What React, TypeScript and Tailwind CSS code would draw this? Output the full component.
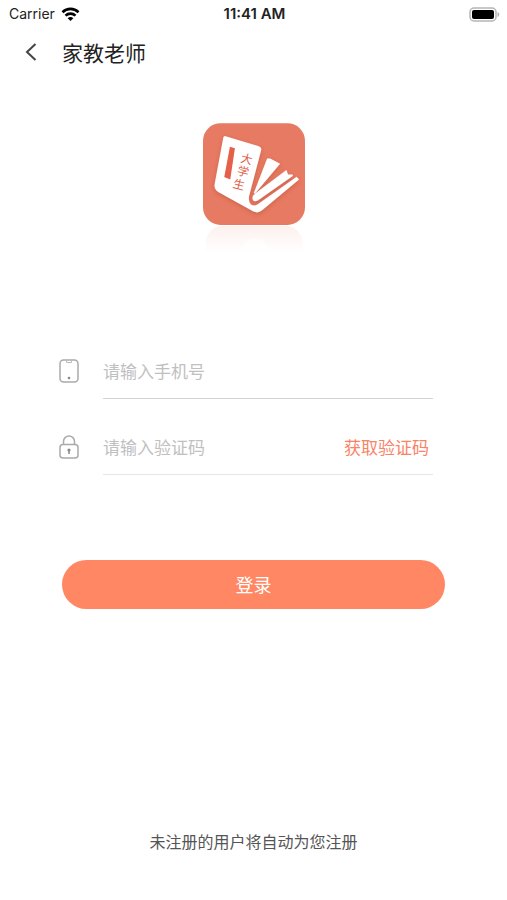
import React from "react";

function StatusBar() {
  return (
    <div className="grid h-7 grid-cols-3 items-center pr-[7px] pl-[9px] font-['Inter',sans-serif] text-[14px] leading-5 text-[#222]">
      <div className="flex items-center gap-[6px]">
        <span>Carrier</span>
        <svg className="h-[14px] w-[19px]" viewBox="0 0 18 14" fill="none" stroke="#000" strokeWidth="2.6" aria-label="Wi-Fi">
          <path d="M1 5.200C5.500.8 12.500.8 17 5.200" />
          <path d="M4 8.600c2.800-2.700 7.200-2.700 10 0" />
          <path d="M9 14 6.200 11.200c1.600-1.500 4-1.500 5.600 0z" fill="#000" stroke="none" />
        </svg>
      </div>
      <span className="text-center text-[15px] font-semibold">11:41 AM</span>
      <svg className="h-[15px] w-[31px] justify-self-end" viewBox="0 0 31 15" aria-label="Battery">
        <rect x="1" y="1" width="26" height="13" rx="4" fill="#fff" stroke="#b5b5b5" strokeWidth="1.500" />
        <rect x="3" y="3" width="22" height="9" rx="2" fill="#000" />
        <path d="M28.500 5c2.400 1 2.400 4 0 5z" fill="#b5b5b5" />
      </svg>
    </div>
  );
}

function Logo() {
  return (
    <svg className="mx-auto h-[140px] w-[102px]" viewBox="38 40 307 420" role="img" aria-label="大学生">
      <defs>
        <linearGradient id="reflection" x1="0" y1="0" x2="0" y2="1">
          <stop offset="0" stopColor="#e87b63" stopOpacity="0.11" />
          <stop offset="1" stopColor="#e87b63" stopOpacity="0" />
        </linearGradient>
        <filter id="shade" x="-20%" y="-20%" width="140%" height="140%">
          <feDropShadow dx="0" dy="5" stdDeviation="7" floodColor="#a83d28" floodOpacity="0.4" />
        </filter>
      </defs>
      <rect x="38" y="40" width="307" height="306" rx="53" fill="#e77a62" />
      <path d="M46 430v-27c0-32 22-54 54-54h184c32 0 54 22 54 54v27z" fill="url(#reflection)" />
      <path d="M158 412c10-32 60-32 76 0v20h-76z" fill="#fff" opacity="0.5" />
      <g filter="url(#shade)">
        <path
          d="M106 79 206 109Q215 112 213 121L177 258C173 280 184 295 203 284L320 201 327 209 215 303Q204 312 190 306L84 247Q71 239 73 224L99 84Q101 77 106 79Z"
          fill="#fff"
        />
        <path d="M231 146 240 146 270 162 194 252 191 250Z" fill="#fff" />
        <path d="M289 181 294 194 307 194 309 198 204 272Q190 280 187 268 186 258 196 251Z" fill="#fff" />
      </g>
      <path d="M119 111 134 115 120 209 102 202Z" fill="#e55f49" />
      <g
        fill="#df604b"
        fontSize="35"
        textAnchor="middle"
        className="font-['Noto_Sans_CJK_SC',sans-serif]"
      >
        <text transform="translate(166 160) rotate(14)">大</text>
        <text transform="translate(156 198) rotate(14)">学</text>
        <text transform="translate(143 237) rotate(14)">生</text>
      </g>
    </svg>
  );
}

function PhoneIcon() {
  return (
    <svg className="h-6 w-5 shrink-0" viewBox="0 0 20 24" fill="none" stroke="#aaa" strokeWidth="1.500" aria-hidden="true">
      <rect x="1" y="1" width="18" height="22" rx="3.500" />
      <path d="M7.500 1.500v2h5v-2" stroke="#bbb" strokeWidth="1" />
      <circle cx="10" cy="19" r="1.300" fill="#888" stroke="none" />
    </svg>
  );
}

function LockIcon() {
  return (
    <svg className="h-6 w-5 shrink-0" viewBox="0 0 20 24" fill="none" stroke="#aaa" strokeWidth="1.500" aria-hidden="true">
      <rect x="1" y="9.500" width="18" height="13.500" rx="3" />
      <path d="M4.500 9.500V6.500a5.500 5.500 0 0 1 11 0v3" />
      <circle cx="10" cy="15" r="1.600" fill="#888" stroke="none" />
      <path d="M10 15v4" stroke="#888" />
    </svg>
  );
}

export default function App() {
  return (
    <div className="flex min-h-screen flex-col bg-white font-['Noto_Sans_CJK_SC',sans-serif]">
      <StatusBar />
      <header className="flex h-12 items-center gap-6 pl-[25px]">
        <button type="button" aria-label="返回">
          <svg className="h-5 w-[13px]" viewBox="0 0 13 20" fill="none" stroke="#444" strokeWidth="2">
            <path d="M10.500 2 2 10l8.500 8" />
          </svg>
        </button>
        <h1 className="text-[21px] leading-7 text-[#222]">家教老师</h1>
      </header>
      <main className="flex flex-1 flex-col pt-[47px]">
        <Logo />
        <form className="mt-20 flex flex-col" onSubmit={(e) => e.preventDefault()}>
          <div className="flex flex-col gap-5 pr-[74px] pl-[59px]">
            <div className="flex items-center gap-6">
              <label htmlFor="phone" aria-label="手机号">
                <PhoneIcon />
              </label>
              <div className="flex h-14 min-w-0 flex-1 border-b border-[#d4d4d4]">
                <input
                  id="phone"
                  type="tel"
                  placeholder="请输入手机号"
                  className="w-full min-w-0 text-[17px] text-[#333] outline-none placeholder:text-[#c0c0c0]"
                />
              </div>
            </div>
            <div className="flex items-center gap-6">
              <label htmlFor="code" aria-label="验证码">
                <LockIcon />
              </label>
              <div className="flex h-14 min-w-0 flex-1 border-b border-[#e6e6e6] pr-1">
                <input
                  id="code"
                  type="text"
                  placeholder="请输入验证码"
                  className="min-w-0 flex-1 text-[17px] text-[#333] outline-none placeholder:text-[#c0c0c0]"
                />
                <button type="button" className="text-[17px] text-[#f98367]">
                  获取验证码
                </button>
              </div>
            </div>
          </div>
          <button type="submit" className="mx-[62px] mt-[85px] h-[49px] rounded-full bg-[#ff8763] text-[18px] text-white">
            登录
          </button>
        </form>
        <p className="mt-auto pb-[47px] text-center text-[16px] leading-6 text-[#555]">未注册的用户将自动为您注册</p>
      </main>
    </div>
  );
}
